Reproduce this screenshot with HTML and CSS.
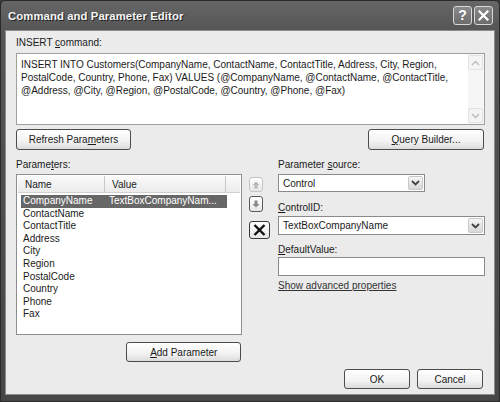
FILE: index.html
```html
<!DOCTYPE html>
<html>
<head>
<meta charset="utf-8">
<link rel="stylesheet" href="styles.css">
</head>
<body>
<div class="window">
  <div class="titlebar">
    <span class="title">Command and Parameter Editor</span>
    <div class="tb-buttons">
      <span class="tb-btn">?</span>
      <span class="tb-btn"><svg width="11" height="11" viewBox="0 0 11 11"><path d="M1.5 1.5 L9.5 9.5 M9.5 1.5 L1.5 9.5" stroke="#fff" stroke-width="2.2" stroke-linecap="square"/></svg></span>
    </div>
  </div>
  <div class="client">
    <div class="label">INSERT <u>c</u>ommand:</div>
    <div class="textarea">
      <div class="ta-text">INSERT INTO Customers(CompanyName, ContactName, ContactTitle, Address, City, Region, PostalCode, Country, Phone, Fax) VALUES (@CompanyName, @ContactName, @ContactTitle, @Address, @City, @Region, @PostalCode, @Country, @Phone, @Fax)</div>
      <div class="vscroll">
        <span class="sb-arrow"><svg width="9" height="6" viewBox="0 0 9 6"><path d="M1 5 L4.5 1.5 L8 5" fill="none" stroke="#bbb" stroke-width="1.4"/></svg></span>
        <span class="sb-arrow"><svg width="9" height="6" viewBox="0 0 9 6"><path d="M1 1 L4.5 4.5 L8 1" fill="none" stroke="#bbb" stroke-width="1.4"/></svg></span>
      </div>
    </div>
    <div class="btn-row">
      <button class="btn btn-refresh">Refresh Para<u>m</u>eters</button>
      <button class="btn btn-query"><u>Q</u>uery Builder...</button>
    </div>
    <div class="lower">
      <div class="col-left">
        <div class="label">Parame<u>t</u>ers:</div>
        <div class="listbox">
          <div class="lv-header">
            <span class="h-cell h-name">Name</span>
            <span class="h-cell h-value">Value</span>
            <span class="h-cell h-rest"></span>
          </div>
          <div class="lv-rows">
            <div class="lv-row selected"><span class="c-name">CompanyName</span><span class="c-value">TextBoxCompanyNam...</span></div>
            <div class="lv-row"><span class="c-name">ContactName</span></div>
            <div class="lv-row"><span class="c-name">ContactTitle</span></div>
            <div class="lv-row"><span class="c-name">Address</span></div>
            <div class="lv-row"><span class="c-name">City</span></div>
            <div class="lv-row"><span class="c-name">Region</span></div>
            <div class="lv-row"><span class="c-name">PostalCode</span></div>
            <div class="lv-row"><span class="c-name">Country</span></div>
            <div class="lv-row"><span class="c-name">Phone</span></div>
            <div class="lv-row"><span class="c-name">Fax</span></div>
          </div>
        </div>
        <div class="add-row"><button class="btn btn-add"><u>A</u>dd Parameter</button></div>
      </div>
      <div class="col-mid">
        <span class="mbtn mbtn-up"><svg width="8" height="8" viewBox="0 0 8 8"><path d="M4 0.5 L7.5 4 L5.5 4 L5.5 7.5 L2.5 7.5 L2.5 4 L0.5 4 Z" fill="#b5b5b5"/></svg></span>
        <span class="mbtn mbtn-down"><svg width="8" height="8" viewBox="0 0 8 8"><path d="M4 7.5 L7.5 4 L5.5 4 L5.5 0.5 L2.5 0.5 L2.5 4 L0.5 4 Z" fill="#8a8a8a"/></svg></span>
        <span class="mbtn mbtn-del"><svg width="13" height="12" viewBox="0 0 13 12"><path d="M1.5 1 L11.5 11 M11.5 1 L1.5 11" stroke="#111" stroke-width="2.4"/></svg></span>
      </div>
      <div class="col-right">
        <div class="label">Parameter <u>s</u>ource:</div>
        <div class="select select-source">
          <span class="sel-text">Control</span>
          <span class="sel-btn"><svg width="9" height="6" viewBox="0 0 9 6"><path d="M1 1 L4.5 4.5 L8 1" fill="none" stroke="#444" stroke-width="1.8"/></svg></span>
        </div>
        <div class="label l2"><u>C</u>ontrolID:</div>
        <div class="select select-control">
          <span class="sel-text">TextBoxCompanyName</span>
          <span class="sel-btn"><svg width="9" height="6" viewBox="0 0 9 6"><path d="M1 1 L4.5 4.5 L8 1" fill="none" stroke="#444" stroke-width="1.8"/></svg></span>
        </div>
        <div class="label l3"><u>D</u>efaultValue:</div>
        <div class="input"></div>
        <a class="link">Show advanced properties</a>
      </div>
    </div>
    <div class="footer">
      <button class="btn btn-ok">OK</button>
      <button class="btn btn-cancel">Cancel</button>
    </div>
  </div>
</div>
</body>
</html>
```
FILE: styles.css
```css
* { box-sizing: border-box; }
html, body { margin: 0; padding: 0; background: #3a3a3a; }
body { font-family: "Liberation Sans", Arial, sans-serif; font-size: 10px; color: #1a1a1a; }

.window {
  width: 500px;
  height: 402px;
  background: linear-gradient(#666, #555 30px, #474747 100%);
  display: flex;
  flex-direction: column;
  padding: 0 4px 6px 4px;
  border: 1px solid #2a2a2a;
  border-radius: 5px 5px 0 0;
}

.titlebar {
  height: 29px;
  display: flex;
  align-items: center;
  justify-content: space-between;
  padding: 0 2px 0 3px;
  flex: none;
}
.title {
  color: #f4f4f4;
  font-weight: bold;
  font-size: 11.3px;
  letter-spacing: 0.1px;
  text-shadow: 1px 1px 0 #222;
}
.tb-buttons { display: flex; gap: 2px; margin-top: -1px; }
.tb-btn {
  width: 19px;
  height: 19px;
  border: 1px solid #d8d8d8;
  border-radius: 3px;
  background: linear-gradient(#8a8a8a, #6c6c6c);
  color: #fff;
  font-weight: bold;
  font-size: 14px;
  display: flex;
  align-items: center;
  justify-content: center;
  line-height: 1;
}

.client {
  flex: 1;
  background: #ebebeb;
  border: 1px solid #8c8c8c;
  display: flex;
  flex-direction: column;
  padding: 5px 9px 5px 10px;
}

.label { line-height: 13px; height: 13px; white-space: nowrap; }

.textarea {
  margin-top: 4px;
  height: 72px;
  background: #fff;
  border: 1px solid #a0a0a0;
  display: flex;
}
.ta-text {
  flex: 1;
  padding: 4px 4px 3px 4px;
  line-height: 13px;
}
.vscroll {
  width: 16px;
  display: flex;
  flex-direction: column;
  justify-content: space-between;
  padding: 1px 1px 1px 0;
  background: #f6f6f6;
}
.sb-arrow {
  height: 15px;
  border: 1px solid #e2e2e2;
  border-radius: 2px;
  background: #f4f4f4;
  display: flex;
  align-items: center;
  justify-content: center;
}

.btn {
  font-family: "Liberation Sans", Arial, sans-serif;
  font-size: 10px;
  color: #1a1a1a;
  height: 21px;
  border: 1px solid #4c4c4c;
  border-radius: 3px;
  background: linear-gradient(#ffffff, #f2f2f2 60%, #dcdcdc);
  padding: 0;
  margin: 0;
  display: flex;
  align-items: center;
  justify-content: center;
}

.btn-row {
  margin-top: 4px;
  display: flex;
  justify-content: space-between;
  padding-right: 1px;
}
.btn-refresh { width: 115px; }
.btn-query { width: 116px; }

.lower {
  margin-top: 8px;
  display: flex;
  gap: 7px;
}
.col-left { width: 229px; display: flex; flex-direction: column; }
.col-mid { width: 22px; display: flex; flex-direction: column; align-items: flex-start; padding-top: 19px; }
.col-right { width: 207px; display: flex; flex-direction: column; }

.listbox {
  margin-top: 3px;
  height: 161px;
  background: #fff;
  border: 1px solid #8e8e8e;
  padding: 1px;
}
.lv-header {
  height: 17px;
  display: flex;
  background: linear-gradient(#fafafa, #ebebeb);
  border-bottom: 1px solid #d0d0d0;
}
.h-cell {
  display: flex;
  align-items: center;
  border-right: 1px solid #c8c8c8;
  padding-left: 7px;
  line-height: 13px;
}
.h-name { width: 87px; }
.h-value { width: 121px; }
.h-rest { flex: 1; border-right: none; }

.lv-rows { padding: 2px 0 0 3px; }
.lv-row {
  height: 12.6px;
  line-height: 12.6px;
  display: flex;
  width: 206px;
  white-space: nowrap;
}
.lv-row .c-name { width: 87px; padding-left: 2px; }
.lv-row .c-value { padding-left: 1px; }
.lv-row.selected { background: #676767; color: #fff; }

.add-row {
  margin-top: 7px;
  display: flex;
  justify-content: flex-end;
  padding-right: 1px;
}
.btn-add { width: 115px; height: 20px; }

.mbtn {
  display: flex;
  align-items: center;
  justify-content: center;
  border-radius: 3px;
  background: linear-gradient(#ffffff, #e6e6e6);
}
.mbtn-up { width: 14px; height: 15px; border: 1px solid #c4c4c4; }
.mbtn-down { width: 14px; height: 16px; border: 1px solid #5a5a5a; margin-top: 4px; }
.mbtn-del { width: 21px; height: 18px; border: 1px solid #3a3a3a; margin-top: 9px; }

.select {
  background: #fff;
  border: 1px solid #8a8a8a;
  display: flex;
  align-items: center;
  justify-content: space-between;
  padding: 1px;
}
.select-source { margin-top: 3px; width: 147px; height: 18px; }
.select-control { margin-top: 2px; width: 207px; height: 19px; }
.sel-text { padding-left: 3px; }
.sel-btn {
  width: 15px;
  height: 100%;
  border: 1px solid #c8c8c8;
  border-radius: 2px;
  background: linear-gradient(#f6f6f6, #d8d8d8);
  display: flex;
  align-items: center;
  justify-content: center;
}
.l2 { margin-top: 9px; }
.l3 { margin-top: 8px; }
.input {
  margin-top: 1px;
  height: 19px;
  width: 207px;
  background: #fff;
  border: 1px solid #8a8a8a;
}
.link {
  margin-top: 3px;
  line-height: 13px;
  color: #333;
  text-decoration: underline;
  white-space: nowrap;
}

.footer {
  margin-top: auto;
  display: flex;
  justify-content: flex-end;
  gap: 7px;
  padding-right: 2px;
}
.btn-ok, .btn-cancel { width: 66px; height: 20px; }
```
